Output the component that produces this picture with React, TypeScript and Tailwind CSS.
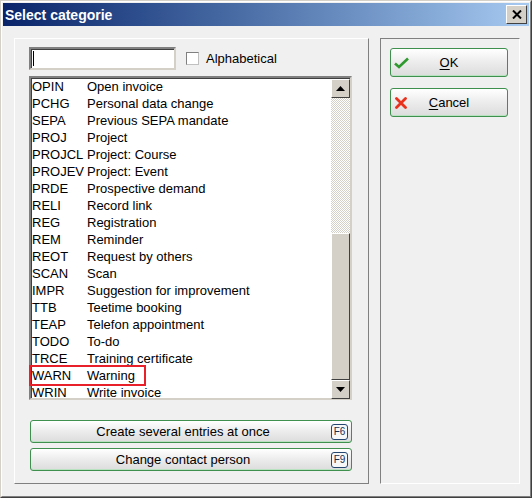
import React from "react";

const rows: [string, string][] = [
  ["OPIN", "Open invoice"],
  ["PCHG", "Personal data change"],
  ["SEPA", "Previous SEPA mandate"],
  ["PROJ", "Project"],
  ["PROJCL", "Project: Course"],
  ["PROJEV", "Project: Event"],
  ["PRDE", "Prospective demand"],
  ["RELI", "Record link"],
  ["REG", "Registration"],
  ["REM", "Reminder"],
  ["REOT", "Request by others"],
  ["SCAN", "Scan"],
  ["IMPR", "Suggestion for improvement"],
  ["TTB", "Teetime booking"],
  ["TEAP", "Telefon appointment"],
  ["TODO", "To-do"],
  ["TRCE", "Training certificate"],
  ["WARN", "Warning"],
  ["WRIN", "Write invoice"],
];

const raised =
  "border border-t-white border-l-white border-r-[#404040] border-b-[#404040] bg-[#d4d0c8]";

// Green rounded button used on the dialog
const GreenButton = ({
  children,
  className = "",
}: {
  children: React.ReactNode;
  className?: string;
}) => (
  <div
    className={`relative flex items-center rounded-[3px] border border-[#3f8f4f] bg-gradient-to-b from-white via-[#ececec] to-[#dcdcdc] shadow-[inset_0_-1px_0_#b9e3c0,inset_0_1px_0_#ffffff] ${className}`}
  >
    {children}
  </div>
);

const FKey = ({ label }: { label: string }) => (
  <div className="flex h-[16px] w-[17px] items-center justify-center rounded-[3px] border border-[#24466f] bg-[#f7f7f7] text-[10px] leading-none text-[#1a2f50]">
    {label}
  </div>
);

export default function App() {
  return (
    <div
      className="h-[498px] w-[532px] border border-t-[#d4d0c8] border-l-[#d4d0c8] border-r-[#404040] border-b-[#404040] text-black"
      style={{ fontFamily: '"Liberation Sans", Arial, sans-serif' }}
    >
      <div className="flex h-full w-full flex-col border border-t-white border-l-white border-r-[#808080] border-b-[#808080] bg-[#f0f0f0] p-px">
        {/* Title bar */}
        <div className="flex h-[23px] shrink-0 items-center justify-between bg-gradient-to-r from-[#0a246a] to-[#a6caf0] pl-[2px] pr-[2px]">
          <span className="text-[14px] font-bold leading-none text-white">
            Select categorie
          </span>
          <div
            className={`flex h-[19px] w-[21px] items-center justify-center ${raised}`}
          >
            <svg width="10" height="9" viewBox="0 0 10 9">
              <path
                d="M1 0.5 L9 8.5 M9 0.5 L1 8.5"
                stroke="#000"
                strokeWidth="2"
              />
            </svg>
          </div>
        </div>

        {/* Body */}
        <div className="flex flex-1 gap-[11px] pl-[11px] pt-[12px]">
          {/* Left panel */}
          <div className="flex h-[446px] w-[355px] flex-col border border-t-white border-l-white border-r-[#808080] border-b-[#808080] pl-[14px] pt-[8px]">
            <div className="flex items-center">
              <div className="h-[23px] w-[147px] border-2 border-t-[#808080] border-l-[#808080] border-r-[#d4d0c8] border-b-[#d4d0c8] bg-white shadow-[inset_1px_1px_0_#404040]">
                <div className="ml-[2px] mt-[2px] h-[15px] w-px bg-black" />
              </div>
              <div className="ml-[10px] h-[13px] w-[13px] border border-[#808080] border-r-[#c0c0c0] border-b-[#c0c0c0] bg-white" />
              <span className="ml-[7px] text-[13px]">Alphabetical</span>
            </div>

            {/* List */}
            <div className="relative mt-[6px] h-[324px] w-[323px] border-2 border-t-[#808080] border-l-[#808080] border-r-[#d4d0c8] border-b-[#d4d0c8] bg-white shadow-[inset_1px_1px_0_#404040]">
              <div className="flex h-full">
                <div className="h-full flex-1 overflow-hidden pl-[1px]">
                  {rows.map(([code, text]) => (
                    <div
                      key={code}
                      className="flex h-[17px] items-center whitespace-nowrap text-[13px] leading-none"
                    >
                      <span className="w-[55px] shrink-0">{code}</span>
                      <span>{text}</span>
                    </div>
                  ))}
                </div>
                {/* Scrollbar */}
                <div className="flex h-full w-[19px] flex-col pt-px">
                  <div
                    className={`flex h-[19px] shrink-0 items-center justify-center ${raised}`}
                  >
                    <svg width="9" height="5" viewBox="0 0 9 5">
                      <path d="M0 5 L4.5 0 L9 5 Z" fill="#000" />
                    </svg>
                  </div>
                  <div className="h-[135px] shrink-0 bg-[repeating-conic-gradient(#d4d0c8_0_25%,#ffffff_0_50%)] bg-[length:2px_2px]" />
                  <div className={`h-[147px] shrink-0 ${raised}`} />
                  <div
                    className={`flex h-[19px] shrink-0 items-center justify-center ${raised}`}
                  >
                    <svg width="9" height="5" viewBox="0 0 9 5">
                      <path d="M0 0 L4.5 5 L9 0 Z" fill="#000" />
                    </svg>
                  </div>
                </div>
              </div>
              {/* Highlight annotation */}
              <div className="absolute left-[-2px] top-[287px] h-[21px] w-[117px] border-2 border-[#e8202a]" />
            </div>

            <GreenButton className="ml-px mt-[20px] h-[23px] w-[322px]">
              <span className="flex-1 pl-[4px] text-center text-[13px]">
                Create several entries at once
              </span>
              <div className="mr-[3px]">
                <FKey label="F6" />
              </div>
            </GreenButton>
            <GreenButton className="ml-px mt-[5px] h-[23px] w-[322px]">
              <span className="flex-1 pl-[4px] text-center text-[13px]">
                Change contact person
              </span>
              <div className="mr-[3px]">
                <FKey label="F9" />
              </div>
            </GreenButton>
          </div>

          {/* Right panel */}
          <div className="flex h-[446px] w-[140px] flex-col border border-t-[#808080] border-l-[#808080] border-r-white border-b-white pl-[9px] pt-[9px]">
            <GreenButton className="h-[29px] w-[118px]">
              <svg
                className="absolute left-[3px] top-[8px]"
                width="15"
                height="12"
                viewBox="0 0 15 12"
              >
                <path
                  d="M1 6.5 L5 10 L14 1.5"
                  stroke="#2e9a2e"
                  strokeWidth="2.6"
                  fill="none"
                  strokeLinejoin="miter"
                />
              </svg>
              <span className="flex-1 text-center text-[13px]">
                <span className="underline underline-offset-2">O</span>K
              </span>
            </GreenButton>
            <GreenButton className="mt-[11px] h-[29px] w-[118px]">
              <svg
                className="absolute left-[4px] top-[8px]"
                width="12"
                height="12"
                viewBox="0 0 12 12"
              >
                <path
                  d="M1.5 1.5 L10.5 10.5 M10.5 1.5 L1.5 10.5"
                  stroke="#e8321e"
                  strokeWidth="2.8"
                  strokeLinecap="round"
                />
              </svg>
              <span className="flex-1 text-center text-[13px]">
                <span className="underline underline-offset-2">C</span>ancel
              </span>
            </GreenButton>
          </div>
        </div>
      </div>
    </div>
  );
}
